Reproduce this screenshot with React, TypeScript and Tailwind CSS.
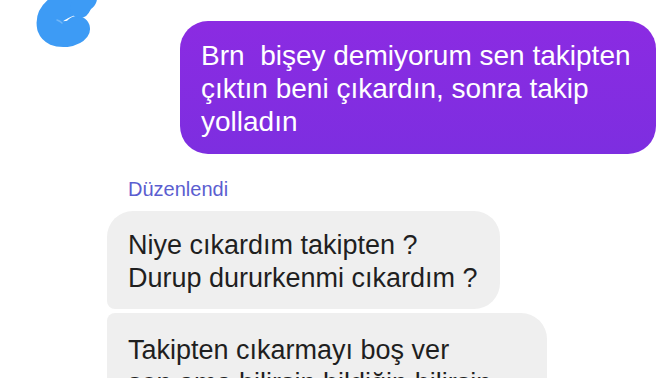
import React from 'react';

const font = { fontFamily: '"Liberation Sans", Arial, sans-serif' };

const Scribble: React.FC = () => (
    <svg className="absolute left-0 top-0" width="110" height="60" viewBox="0 0 110 60">
        <path d="M84 -2 Q66 4 56 10 Q48 17 50 27 Q53 35 66 34 Q74 33 77 29" fill="none" stroke="#3d9bf5" strokeWidth="26" strokeLinecap="round" strokeLinejoin="round" />
        <path d="M88 -6 L80 8" fill="none" stroke="#3d9bf5" strokeWidth="20" strokeLinecap="round" />
        <path d="M57 20 Q60 21 62 23" fill="none" stroke="#6fb6f8" strokeWidth="1.5" strokeLinecap="round" />
    </svg>
);

export default function App() {
    return (
        <div className="relative w-[672px] h-[378px] overflow-hidden bg-white" style={font}>
            <Scribble />

            <div className="flex flex-col pt-[21px]">
                <div className="flex justify-end pr-[16px]">
                    <div className="w-[476px] rounded-[28px] bg-gradient-to-b from-[#8b2be2] to-[#7d2ee0] pl-[21px] pr-2 pt-[18px] pb-[16px] text-[28px] leading-[33px] text-white">
                        Brn&nbsp; bişey demiyorum sen takipten
                        <br />
                        çıktın beni çıkardın, sonra takip
                        <br />
                        yolladın
                    </div>
                </div>

                <div className="pl-[128px] mt-[24px] text-[20px] leading-[22px] text-[#5b5ed0]">Düzenlendi</div>

                <div className="flex flex-col gap-[4px] pl-[107px] mt-[11px]">
                    <div className="w-[393px] rounded-t-[26px] rounded-br-[26px] rounded-bl-[8px] bg-[#efefef] pl-[21px] pt-[18px] pb-[14px] text-[27px] leading-[33px] text-[#1f1f1f]">
                        Niye cıkardım takipten ?
                        <br />
                        Durup dururkenmi cıkardım ?
                    </div>
                    <div className="w-[440px] rounded-tl-[8px] rounded-tr-[26px] rounded-b-[26px] bg-[#efefef] pl-[21px] pt-[21px] pb-[17px] text-[27px] leading-[33px] text-[#1f1f1f] whitespace-nowrap overflow-hidden">
                        Takipten cıkarmayı boş ver
                        <br />
                        sen ama bilirsin bildiğin bilirsin
                    </div>
                </div>
            </div>
        </div>
    );
}
